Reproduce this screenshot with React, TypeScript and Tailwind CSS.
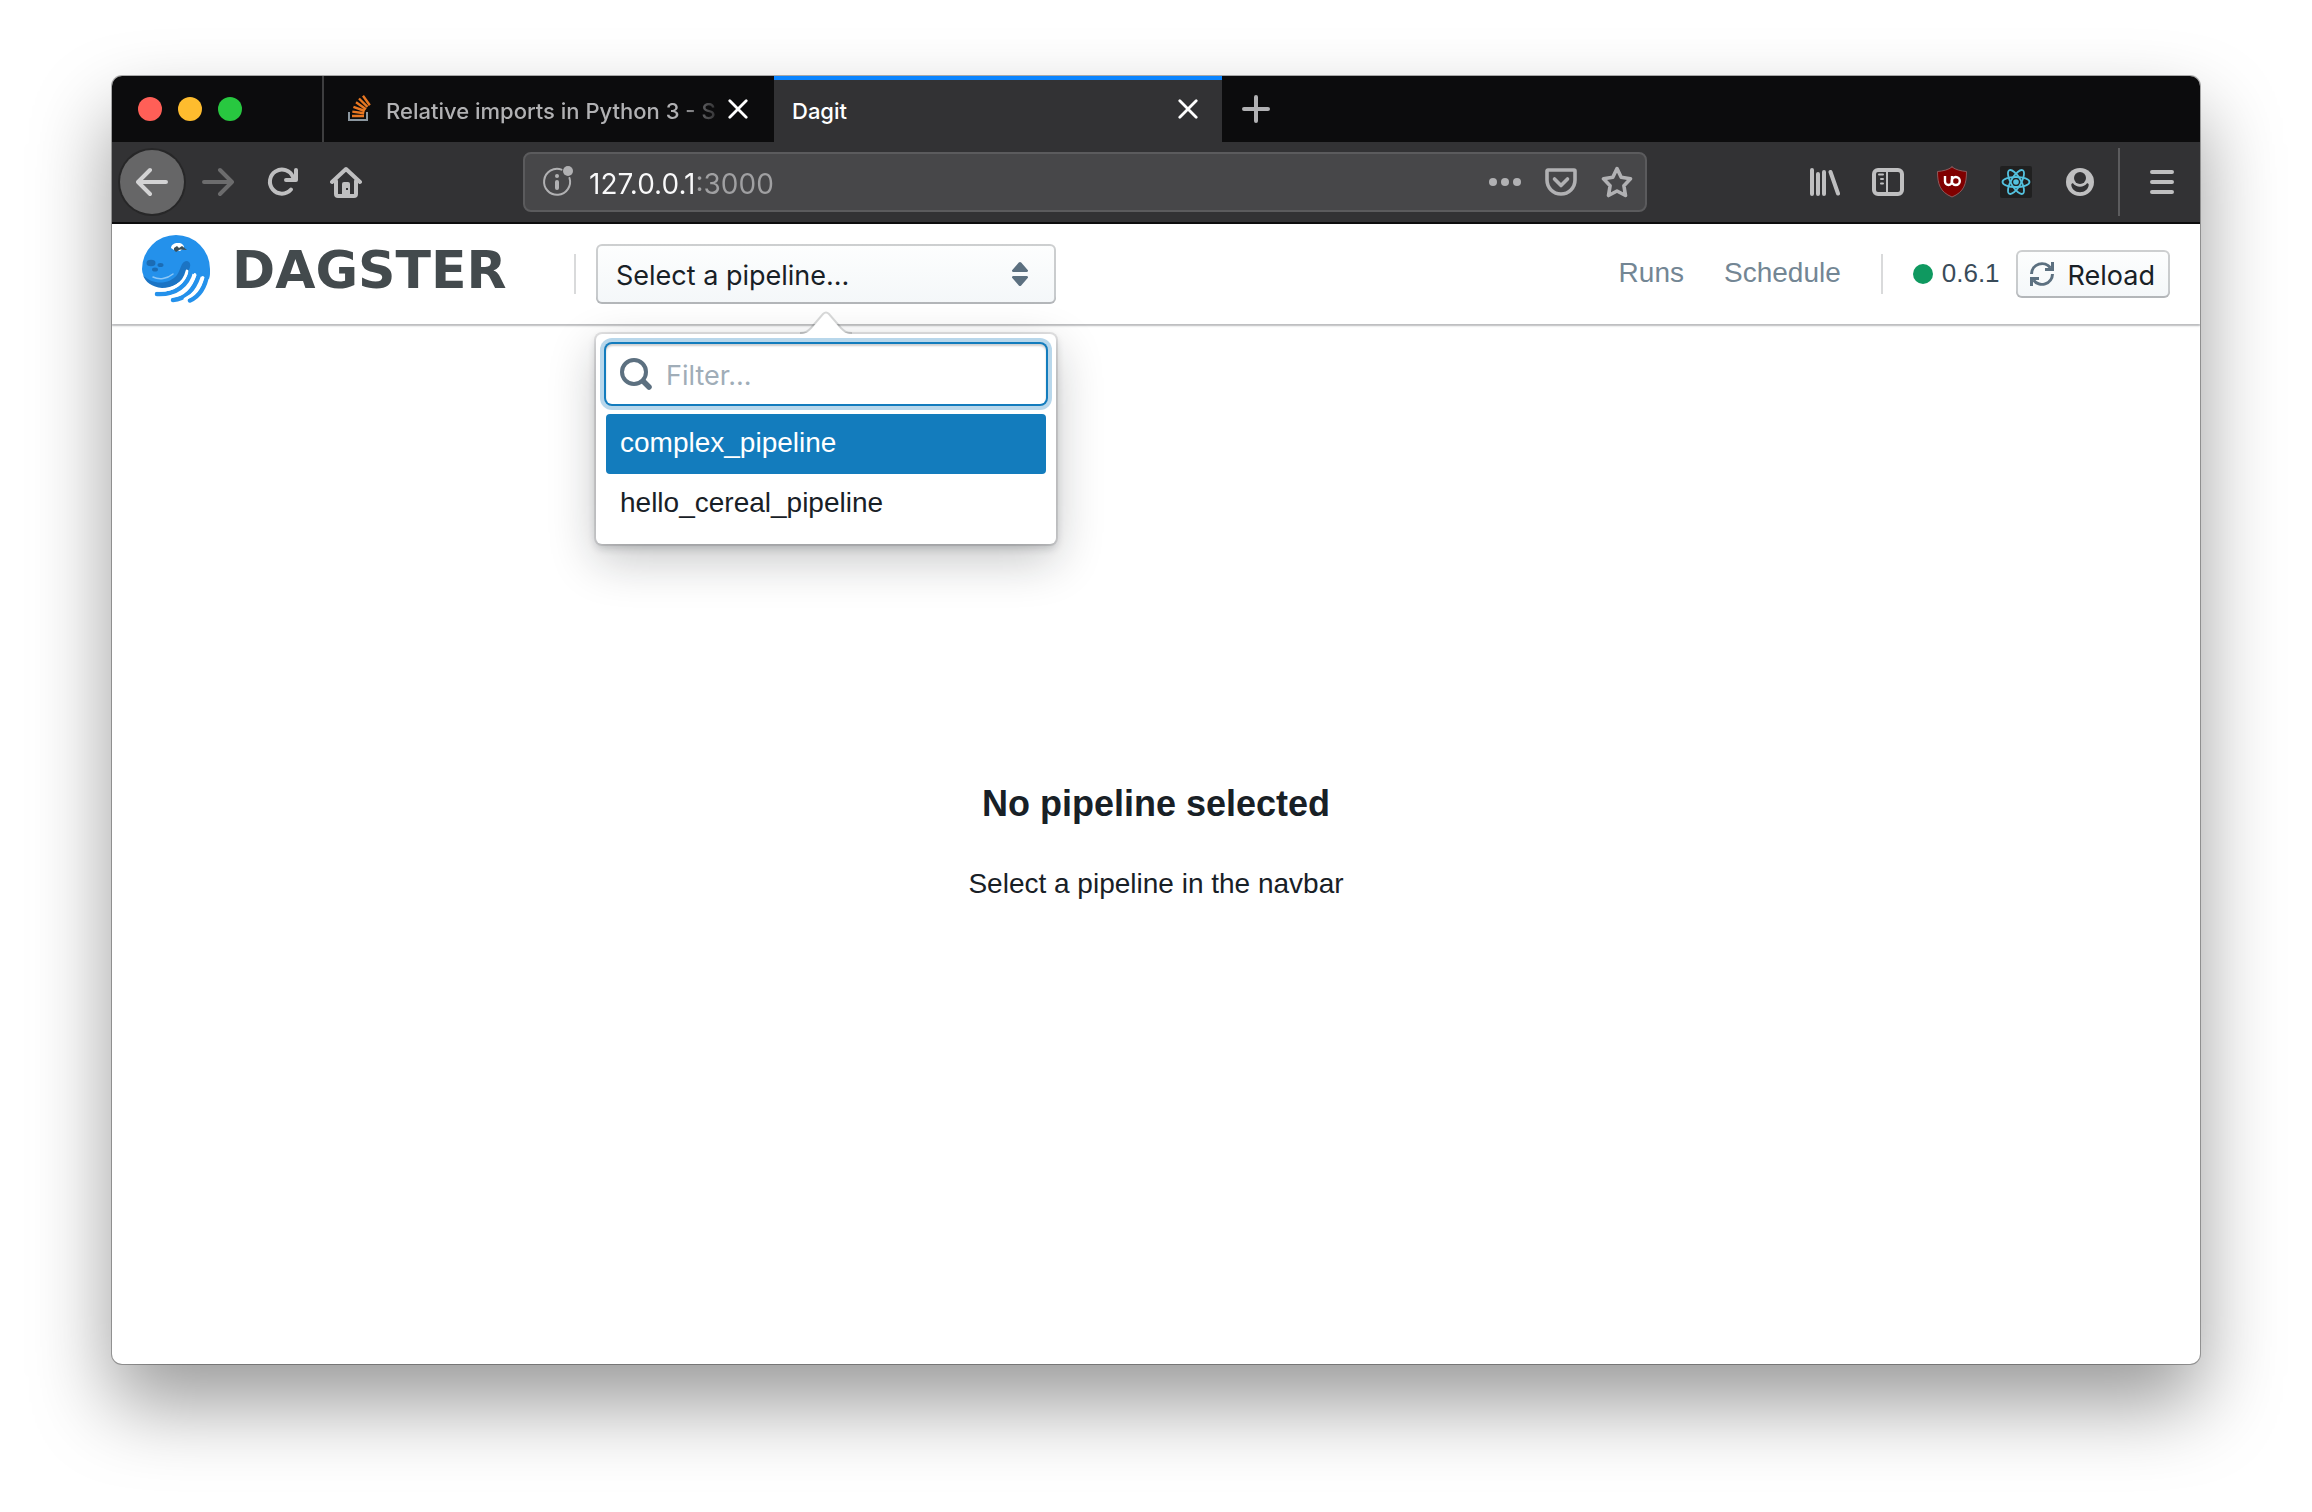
import React, { type ReactNode } from "react";

function Icon({ children, label }: { children: ReactNode; label?: string }) {
  return (
    <svg
      viewBox="0 0 32 32"
      className="size-8 shrink-0"
      fill="none"
      stroke="currentColor"
      strokeWidth={4}
      strokeLinecap="round"
      strokeLinejoin="round"
      aria-label={label}
      aria-hidden={label ? undefined : true}
    >
      {children}
    </svg>
  );
}

function ToolButton({ label, className = "text-[#bfbfc0]", children }: { label: string; className?: string; children: ReactNode }) {
  return (
    <button type="button" aria-label={label} className={`shrink-0 ${className}`}>
      <Icon>{children}</Icon>
    </button>
  );
}

function CloseIcon() {
  return (
    <svg viewBox="0 0 20 20" className="size-5" fill="none" stroke="currentColor" strokeWidth={2.8} strokeLinecap="round" aria-hidden>
      <path d="M1.8 1.8l16.4 16.4M18.2 1.8L1.8 18.2" />
    </svg>
  );
}

function TabBar() {
  return (
    <div className="flex h-[66px] bg-[#0c0c0d] text-[22px] font-medium">
      <div className="flex w-[210px] shrink-0 items-center gap-4 pl-[26px]">
        <button type="button" aria-label="Close window" className="size-6 rounded-full bg-[#ff5f57]" />
        <button type="button" aria-label="Minimize window" className="size-6 rounded-full bg-[#febc2e]" />
        <button type="button" aria-label="Zoom window" className="size-6 rounded-full bg-[#28c840]" />
      </div>
      <div className="flex w-[452px] items-center border-l-2 border-[#3e3e3f] pl-6 pr-[26px] text-[#b1b1b3]">
        <svg viewBox="0 0 24 28" className="mr-[14px] h-7 w-6 shrink-0" fill="none" aria-hidden>
          <path d="M1 17v8h18v-8" stroke="#8c979f" strokeWidth={2} />
          <g stroke="#e87722" strokeWidth={2.4}>
            <path d="M4 21h12M4.3 16.6l11.900 1.600M5.400 11.800l11.400 4.200M8 7.200l10 7M11 3.500l8.500 8.400M15 .8l6.800 9.400" />
          </g>
        </svg>
        <span className="flex-1 whitespace-nowrap pt-1 [mask-image:linear-gradient(to_right,black_85%,transparent)]">
          Relative imports in Python 3 - S
        </span>
        <button type="button" aria-label="Close tab" className="text-white">
          <CloseIcon />
        </button>
      </div>
      <div className="flex w-[448px] items-center justify-between border-t-4 border-[#0a84ff] bg-[#323234] pb-1 pl-[18px] pr-6 text-white">
        <span className="pt-1">Dagit</span>
        <button type="button" aria-label="Close tab">
          <CloseIcon />
        </button>
      </div>
      <button type="button" aria-label="New tab" className="ml-[18px] text-[#b1b1b3]">
        <Icon>
          <path d="M4 16h24M16 4v24" />
        </Icon>
      </button>
    </div>
  );
}

function Toolbar() {
  return (
    <div className="relative z-10 flex h-[82px] items-center border-b-2 border-[#0c0c0d] bg-[#323234] pl-2 pr-[22px]">
      <button
        type="button"
        aria-label="Back"
        className="flex size-16 items-center justify-center rounded-full bg-[#666667] text-[#d3d3d4] ring-2 ring-[#272728]"
      >
        <Icon>
          <path d="M2 16h28M14 4L2 16l12 12" />
        </Icon>
      </button>
      <div className="ml-[18px] flex gap-8">
        <ToolButton label="Forward" className="text-[#6c6c6d]">
          <path d="M2 16h28M18 4l12 12-12 12" />
        </ToolButton>
        <ToolButton label="Reload page">
          <path d="M25 23.5A12 12 0 1 1 27 11M30 4v10H20" />
        </ToolButton>
        <ToolButton label="Home">
          <path d="M2 16L16 3l14 13M6 15v13a2 2 0 0 0 2 2h16a2 2 0 0 0 2-2V15" />
          <path d="M12 18a2 2 0 0 1 2-2h4a2 2 0 0 1 2 2v12h-8z" fill="currentColor" stroke="none" />
          <path d="M16 22h2v2h-2z" fill="#323234" stroke="none" />
        </ToolButton>
      </div>
      <div className="ml-[161px] flex h-[60px] w-[1124px] items-center gap-6 rounded-lg border-2 border-[#5b5b5d] bg-[#474749] pl-4 pr-3 text-[#b1b1b3]">
        <div className="flex flex-1 items-center gap-4">
          <Icon label="Site information">
            <path d="M20.5 3.6A13 13 0 1 0 28.5 12" strokeWidth={2} />
            <path d="M16 16v6" />
            <circle cx="16" cy="10" r="2" fill="currentColor" stroke="none" />
            <circle cx="27" cy="5" r="5" fill="currentColor" stroke="none" />
          </Icon>
          <input
            type="text"
            aria-label="Address"
            defaultValue="127.0.0.1:3000"
            className="h-12 min-w-0 flex-1 bg-[linear-gradient(to_right,#f9f9fa_107px,#a0a0a2_107px)] bg-clip-text pt-[3px] text-[28px] text-transparent outline-none"
          />
        </div>
        <ToolButton label="Page actions" className="text-[#b1b1b3]">
          <g fill="currentColor" stroke="none">
            <circle cx="4" cy="16" r="4" />
            <circle cx="16" cy="16" r="4" />
            <circle cx="28" cy="16" r="4" />
          </g>
        </ToolButton>
        <ToolButton label="Save to Pocket" className="text-[#b1b1b3]">
          <path d="M3 4h26a1 1 0 0 1 1 1v9a14 14 0 0 1-28 0V5a1 1 0 0 1 1-1zM9.5 13l6.500 6.500 6.500-6.500" strokeWidth={3.6} />
        </ToolButton>
        <ToolButton label="Bookmark this page" className="text-[#b1b1b3]">
          <path d="M16 2.500l4.200 8.800 9.300 1.500-6.600 6.900 1.600 9.800L16 25l-8.500 4.500 1.600-9.800-6.600-6.900 9.300-1.500z" strokeWidth={3.6} />
        </ToolButton>
      </div>
      <div className="ml-auto flex items-center gap-8">
        <ToolButton label="Library">
          <path d="M4 4v24M10 8v20M16 6v22M22.500 6l7.500 21.500" />
        </ToolButton>
        <ToolButton label="Sidebars">
          <rect x="2" y="4" width="28" height="24" rx="4" />
          <path d="M15 4v24M7 8.500h4M9 13h2M9 17.500h2" strokeWidth={2} />
        </ToolButton>
        <ToolButton label="uBlock Origin">
          <path d="M16 1c4 3 9 4 14.500 4.500C30.500 18 28 26 16 31 4 26 1.500 18 1.500 5.500 7 5 12 4 16 1z" fill="#800000" stroke="#8d5a5c" strokeWidth={1} />
          <path d="M9 10v5.500a3.500 3.500 0 0 0 7 0V10" stroke="#fff" strokeWidth={2.4} strokeLinecap="butt" />
          <circle cx="19.800" cy="15" r="4" stroke="#fff" strokeWidth={2.400} />
        </ToolButton>
        <ToolButton label="React Developer Tools">
          <rect width="32" height="32" rx="2" fill="#202020" stroke="none" />
          <g stroke="#53c1de" strokeWidth={1.800}>
            <ellipse cx="16" cy="16" rx="13.500" ry="5" />
            <ellipse cx="16" cy="16" rx="13.500" ry="5" transform="rotate(60 16 16)" />
            <ellipse cx="16" cy="16" rx="13.500" ry="5" transform="rotate(120 16 16)" />
          </g>
          <circle cx="16" cy="16" r="2.800" fill="#53c1de" stroke="none" />
        </ToolButton>
        <ToolButton label="Account">
          <circle cx="16" cy="16" r="14" fill="currentColor" stroke="none" />
          <circle cx="16" cy="12" r="6" fill="#323234" stroke="none" />
          <path d="M9 17.300c3 4.500 11 4.500 14 0 1 0 1.700.5 1.700 1.500 0 4-4 7.500-8.700 7.500s-8.700-3.500-8.700-7.500c0-1 .7-1.500 1.700-1.500z" fill="#323234" stroke="none" />
        </ToolButton>
      </div>
      <div className="ml-[22px] mr-[26px] h-[68px] w-[2px] bg-[#5c5c5e]" />
      <ToolButton label="Open menu">
        <path d="M6 6h20M6 16h20M6 26h20" />
      </ToolButton>
    </div>
  );
}

function DagsterLogo() {
  return (
    <a href="#home" aria-label="Dagster" className="mb-[10px] flex items-center gap-[22px]">
      <svg viewBox="0 0 68 68" className="size-[68px] shrink-0" fill="none" aria-hidden>
        <path d="M0 34a34 34 0 0 1 68 0c0 4 0 7-1 10L45 37C39 48 30 53 19 52 8 50 0 43 0 34z" fill="#2491eb" />
        <path d="M1 40C10 50 27 50 35 40c4-6 4-13 9-14 6 0 5 7 1 12C40 47 30 53 20 53 10 52 3 47 1 40z" fill="#1b74c4" />
        <g strokeLinecap="round" stroke="#2491eb" strokeWidth={4.500}>
          <path d="M49 36C46 50 34 60 15 59" />
          <path d="M57 40C52 55 43 64 31 65" />
          <path d="M65.500 38C63 54 56 62 48 65.500" />
        </g>
        <g strokeLinecap="round" stroke="#fff" strokeWidth={2.800}>
          <path d="M45 36C42 49 30 57 14 55" />
          <path d="M53 39.500C49 52 41 60 29 61.500" />
          <path d="M61 42.500C58 52 52 60 43 64" />
        </g>
        <path d="M11 42c6 3 14 2 20-3" stroke="#8cc6f5" strokeWidth={1.500} strokeLinecap="round" />
        <g fill="#1b6cb4">
          <ellipse cx="9" cy="28" rx="4.500" ry="3.200" />
          <ellipse cx="18.500" cy="30" rx="3" ry="2" />
          <ellipse cx="13" cy="34.500" rx="3" ry="2" />
        </g>
        <path d="M29 13c0-3 3-5 7-5 4 0 6 2 6 5l-4 3-6-1z" fill="#fff" />
        <path d="M32 13l3-2 2 2 3-2 5 4-7-.5-4 2.500-2-2z" fill="#3c4f58" />
      </svg>
      <span className="pt-0.5 font-['DejaVu_Sans'] text-[52px] font-bold leading-none text-[#434a4d]">DAGSTER</span>
    </a>
  );
}

const pipelines = ["complex_pipeline", "hello_cereal_pipeline"];

function PipelinePicker() {
  return (
    <div className="relative w-[460px]">
      <button
        type="button"
        aria-haspopup="listbox"
        aria-expanded="true"
        className="flex h-[60px] w-full items-center justify-between rounded-md bg-linear-to-b from-[#fdfefe] to-[#f4f7f9] px-5 font-[Inter] text-[27px] text-[#182026] shadow-[inset_0_0_0_2px_rgba(16,22,26,0.2),inset_0_-2px_0_rgba(16,22,26,0.1)]"
      >
        <span className="pt-1">Select a pipeline...</span>
        <svg viewBox="0 0 32 32" className="size-8" fill="#5c7080" aria-hidden>
          <path d="M9.200 14h13.600a1.200 1.200 0 0 0 .9-2l-6.500-7.400a1.600 1.600 0 0 0-2.400 0L8.300 12a1.200 1.200 0 0 0 .9 2zM9.200 18h13.600a1.200 1.200 0 0 1 .9 2l-6.500 7.400a1.600 1.600 0 0 1-2.400 0L8.300 20a1.200 1.200 0 0 1 .9-2z" />
        </svg>
      </button>
      <div className="absolute left-0 top-full z-20 mt-[30px] w-full rounded-md bg-white p-[10px] shadow-[0_0_0_2px_rgba(16,22,26,0.1),0_4px_8px_rgba(16,22,26,0.2),0_16px_48px_rgba(16,22,26,0.24)]">
        <svg viewBox="0 0 60 24" className="absolute bottom-full left-1/2 h-6 w-[60px] -translate-x-1/2" aria-hidden>
          <path d="M4 24c6 0 8-2 11-5L27 5c2-2 4-2 6 0l12 14c3 3 5 5 11 5z" fill="#fff" />
          <path d="M4 23c6 0 8-2 11-5L27 4c2-2 4-2 6 0l12 14c3 3 5 5 11 5" fill="none" stroke="#10161a" strokeOpacity={0.16} strokeWidth={2} />
        </svg>
        <div className="flex h-[60px] items-center gap-[14px] rounded-md bg-white px-[14px] text-[#5c7080] shadow-[0_0_0_2px_#137cbd,0_0_0_6px_rgba(19,124,189,0.3),inset_0_2px_2px_rgba(16,22,26,0.2)]">
          <Icon>
            <circle cx="14" cy="14" r="12" />
            <path d="M24 24l5 5" strokeWidth={5.500} />
          </Icon>
          <input
            type="text"
            aria-label="Filter pipelines"
            placeholder="Filter..."
            className="h-12 min-w-0 flex-1 bg-transparent pt-[3px] font-[Inter] text-[27px] outline-none placeholder:text-[#a0adb8]"
          />
        </div>
        <ul className="mt-[10px]">
          {pipelines.map((name, i) => (
            <li key={name}>
              <button
                type="button"
                className={`h-[60px] w-full rounded px-[14px] pb-0.5 text-left text-[28px] ${i === 0 ? "bg-[#137cbd] text-white" : "text-[#182026]"}`}
              >
                {name}
              </button>
            </li>
          ))}
        </ul>
      </div>
    </div>
  );
}

function Navbar() {
  return (
    <header className="flex h-[100px] items-center bg-white px-[30px] font-['Liberation_Sans'] text-[28px] shadow-[0_0_0_2px_rgba(16,22,26,0.1),0_2px_2px_rgba(16,22,26,0.2)]">
      <div className="w-[432px] shrink-0">
        <DagsterLogo />
      </div>
      <div className="mr-5 h-10 w-[2px] bg-[#d9dadb]" />
      <PipelinePicker />
      <nav className="ml-auto flex gap-10 pb-0.5 text-[#738694]">
        <a href="#runs">Runs</a>
        <a href="#schedule">Schedule</a>
      </nav>
      <div className="ml-10 mr-[30px] h-10 w-[2px] bg-[#d9dadb]" />
      <div className="flex items-center gap-[9px] text-[26px] text-[#394b59]">
        <span className="size-5 rounded-full bg-[#0f9960]" />
        <span className="pb-0.5">0.6.1</span>
      </div>
      <button
        type="button"
        className="ml-4 flex h-12 items-center gap-[13px] rounded-md bg-linear-to-b from-[#fdfefe] to-[#f4f7f9] pl-[13px] pr-[15px] font-[Inter] text-[27px] text-[#182026] shadow-[inset_0_0_0_2px_rgba(16,22,26,0.2),inset_0_-2px_0_rgba(16,22,26,0.1)]"
      >
        <svg viewBox="0 0 26 26" className="size-[26px]" fill="none" stroke="#5c7080" strokeWidth={3} aria-hidden>
          <path d="M2.500 13a10.500 10.500 0 0 1 19-6M23.500 13a10.500 10.500 0 0 1-19 6" />
          <path d="M16 8.500h7.500V1M10 17.500H2.500V25" />
        </svg>
        <span className="pt-1">Reload</span>
      </button>
    </header>
  );
}

export default function App() {
  return (
    <div className="flex min-h-screen flex-col bg-white px-[112px] pb-[148px] pt-[76px] font-[Inter]">
      <div className="flex flex-1 flex-col overflow-hidden rounded-[10px] bg-white shadow-[0_0_0_1px_rgba(0,0,0,0.3),0_40px_80px_rgba(0,0,0,0.4)]">
        <TabBar />
        <Toolbar />
        <Navbar />
        <main className="flex flex-1 flex-col items-center justify-center gap-[42px] pb-0.5 font-['Liberation_Sans'] text-[#182026]">
          <h1 className="text-[36px] font-bold leading-10">No pipeline selected</h1>
          <p className="text-[28px] leading-9">Select a pipeline in the navbar</p>
        </main>
      </div>
    </div>
  );
}
